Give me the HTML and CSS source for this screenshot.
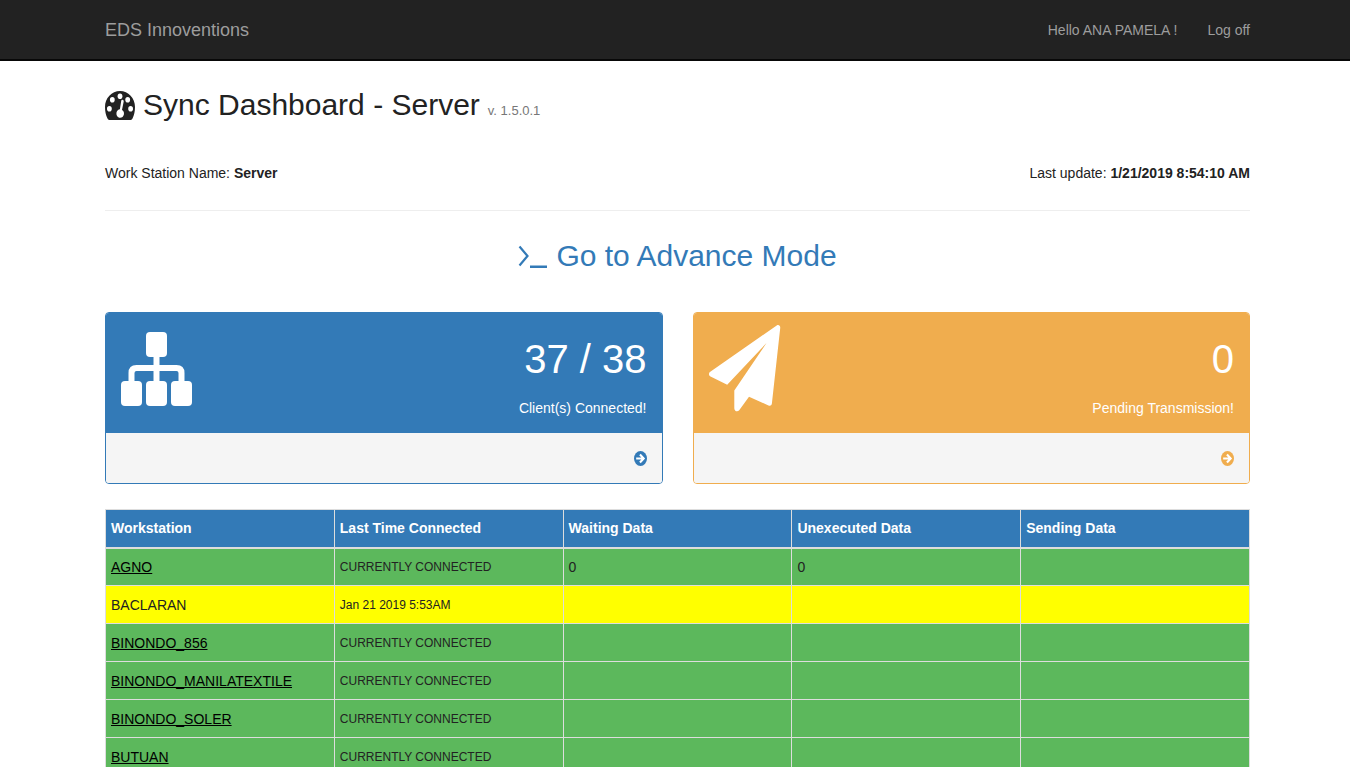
FILE: index.html
```html
<!DOCTYPE html>
<html lang="en">
<head>
<meta charset="utf-8">
<meta name="viewport" content="width=device-width, initial-scale=1">
<title>Sync Dashboard - Server</title>
<link rel="stylesheet" href="styles.css">
</head>
<body>
<header class="navbar">
  <nav class="container navbar-inner">
    <a class="brand" href="#">EDS Innoventions</a>
    <div class="nav-links">
      <a href="#">Hello ANA PAMELA !</a>
      <a href="#">Log off</a>
    </div>
  </nav>
</header>
<main class="container">
  <h1 class="title">
    <svg class="title-icon" viewBox="0 0 30 29" aria-hidden="true">
      <path fill="#222" d="M15 0C6.700 0 0 7 0 16c0 4.500.900 8 2.500 11.600.400.900.900 1.400 1.800 1.400h21.400c.900 0 1.400-.500 1.800-1.400C29.100 24 30 20.500 30 16 30 7 23.300 0 15 0z"/>
      <g fill="#fff"><ellipse cx="15" cy="5.200" rx="2.400" ry="2.800"/><ellipse cx="7.300" cy="8.800" rx="2.400" ry="2.800"/><ellipse cx="22.700" cy="8.800" rx="2.400" ry="2.800"/><ellipse cx="4.400" cy="17.800" rx="2.400" ry="2.800"/><ellipse cx="25.600" cy="17.800" rx="2.400" ry="2.800"/><path d="M17.500 8.800c1 .200 1.400.900 1.200 1.800l-1.700 8.400c1.500.900 2.300 2.600 1.900 4.500-.500 2.300-2.500 3.700-4.600 3.200-2.100-.500-3.300-2.900-2.800-5.100.400-1.900 1.900-3.200 3.400-3.400l1.300-8.300c.100-.800.600-1.200 1.300-1.100z"/></g>
    </svg>
    <span>Sync Dashboard - Server</span>
    <small>v. 1.5.0.1</small>
  </h1>
  <div class="status">
    <p>Work Station Name: <strong>Server</strong></p>
    <p>Last update: <strong>1/21/2019 8:54:10 AM</strong></p>
  </div>
  <h2 class="mode">
    <a href="#">
      <svg class="mode-icon" viewBox="0 0 30 29" aria-hidden="true"><path d="M1.500 4.500 9.500 14 1.500 23.500" fill="none" stroke="currentColor" stroke-width="2.200"/><path d="M12 23.500h17V26H12z" fill="currentColor"/></svg>
      <span>Go to Advance Mode</span>
    </a>
  </h2>
  <div class="panels">
    <section class="panel panel-blue">
      <div class="panel-head">
        <svg class="tree-icon" viewBox="0 0 72 76" fill="#fff" aria-hidden="true"><rect x="25" y="1" width="21" height="25" rx="4"/><rect y="50" width="21" height="25" rx="4"/><rect x="25" y="50" width="21" height="25" rx="4"/><rect x="50" y="50" width="21" height="25" rx="4"/><path d="M10.500 52V42q0-5 5-5h40q5 0 5 5v10M35.500 25v27" fill="none" stroke="#fff" stroke-width="6"/></svg>
        <div class="panel-text"><div class="count">37 / 38</div><div>Client(s) Connected!</div></div>
      </div>
      <a class="panel-foot" href="#" aria-label="Client details">
        <svg class="arrow-icon" viewBox="0 0 12 15" preserveAspectRatio="none" aria-hidden="true"><ellipse cx="6" cy="7.500" rx="6" ry="7.500" fill="currentColor"/><path d="M2 7.500h7M5.500 3.500l3.500 4-3.500 4" fill="none" stroke="#fff" stroke-width="1.900"/></svg>
      </a>
    </section>
    <section class="panel panel-orange">
      <div class="panel-head">
        <svg class="plane-icon" viewBox="0 0 72 87" fill="#fff" aria-hidden="true"><path d="M67.700.500c1.800-1.300 3.900.200 3.500 2.700L62.900 78.500c-.300 1.900-1.700 2.700-3.400 2L40 71.800 30.200 85.200c-1.800 2.200-4.900 1-4.900-2V65.500L57.500 18 18.200 59.700 1.500 51.500c-2-.900-2-3.600-.2-4.700z"/></svg>
        <div class="panel-text"><div class="count">0</div><div>Pending Transmission!</div></div>
      </div>
      <a class="panel-foot" href="#" aria-label="Transmission details">
        <svg class="arrow-icon" viewBox="0 0 12 15" preserveAspectRatio="none" aria-hidden="true"><ellipse cx="6" cy="7.500" rx="6" ry="7.500" fill="currentColor"/><path d="M2 7.500h7M5.500 3.500l3.500 4-3.500 4" fill="none" stroke="#fff" stroke-width="1.900"/></svg>
      </a>
    </section>
  </div>
  <table class="stations">
    <thead>
      <tr><th scope="col">Workstation</th><th scope="col">Last Time Connected</th><th scope="col">Waiting Data</th><th scope="col">Unexecuted Data</th><th scope="col">Sending Data</th></tr>
    </thead>
    <tbody>
      <tr><td><a href="#">AGNO</a></td><td class="time">CURRENTLY CONNECTED</td><td>0</td><td>0</td><td></td></tr>
      <tr class="offline"><td>BACLARAN</td><td class="time">Jan 21 2019 5:53AM</td><td></td><td></td><td></td></tr>
      <tr><td><a href="#">BINONDO_856</a></td><td class="time">CURRENTLY CONNECTED</td><td></td><td></td><td></td></tr>
      <tr><td><a href="#">BINONDO_MANILATEXTILE</a></td><td class="time">CURRENTLY CONNECTED</td><td></td><td></td><td></td></tr>
      <tr><td><a href="#">BINONDO_SOLER</a></td><td class="time">CURRENTLY CONNECTED</td><td></td><td></td><td></td></tr>
      <tr><td><a href="#">BUTUAN</a></td><td class="time">CURRENTLY CONNECTED</td><td></td><td></td><td></td></tr>
    </tbody>
  </table>
</main>
</body>
</html>
```
FILE: styles.css
```css
* { box-sizing: border-box; }
html { overflow: hidden; }
body {
  margin: 0;
  background: #fff;
  color: #222;
  font: 14px/24px "Liberation Sans", Arial, sans-serif;
}
a { color: inherit; text-decoration: none; }
p { margin: 0; }
.container { width: 100%; max-width: 1150px; margin: 0 auto; padding-left: 5px; }
.navbar { background: #222; border-bottom: 2px solid #080808; color: #9d9d9d; }
.navbar-inner { display: flex; justify-content: space-between; align-items: center; height: 59px; }
.brand { font-size: 18px; }
.nav-links { display: flex; gap: 30px; }
.title {
  display: flex;
  align-items: baseline;
  gap: 8px;
  margin: 20px 0 32px;
  font-size: 30px;
  font-weight: 400;
  line-height: 48px;
}
.title-icon { align-self: center; width: 30px; height: 29px; }
.title small { color: #777; font-size: 13px; line-height: 16px; }
.status {
  display: flex;
  justify-content: space-between;
  padding-bottom: 25px;
  border-bottom: 1px solid #eee;
}
.mode { display: flex; justify-content: center; margin: 21px 0 32px; font-size: 30px; font-weight: 400; line-height: 48px; }
.mode a { display: flex; align-items: center; gap: 8px; color: #337ab7; }
.mode-icon { width: 30px; height: 29px; }
.panels { display: grid; grid-template-columns: 1fr 1fr; gap: 30px; margin-bottom: 25px; }
.panel { border: 1px solid currentColor; border-radius: 4px; overflow: hidden; }
.panel-blue { color: #337ab7; }
.panel-orange { color: #f0ad4e; }
.panel-head { display: flex; justify-content: space-between; height: 120px; padding: 12px 15px; background: currentColor; }
.panel-text { color: #fff; text-align: right; }
.count { margin: 8px 0 10px; font-size: 40px; line-height: 53px; }
.tree-icon { width: 72px; height: 76px; margin-top: 6px; }
.plane-icon { width: 72px; height: 87px; }
.panel-foot { display: flex; justify-content: flex-end; align-items: center; height: 50px; padding: 0 15px; background: #f5f5f5; }
.arrow-icon { width: 13px; height: 15px; }
.stations { width: 100%; table-layout: fixed; border-collapse: collapse; }
.stations th, .stations td { height: 38px; padding: 6px 5px; border: 1px solid #ddd; line-height: 24px; text-align: left; }
.stations th { background: #337ab7; border-bottom-width: 2px; color: #fff; }
.stations td { background: #5cb85c; }
.stations .offline td { background: #ff0; }
.stations a { color: #000; text-decoration: underline; }
.stations .time { font-size: 12px; }
```
